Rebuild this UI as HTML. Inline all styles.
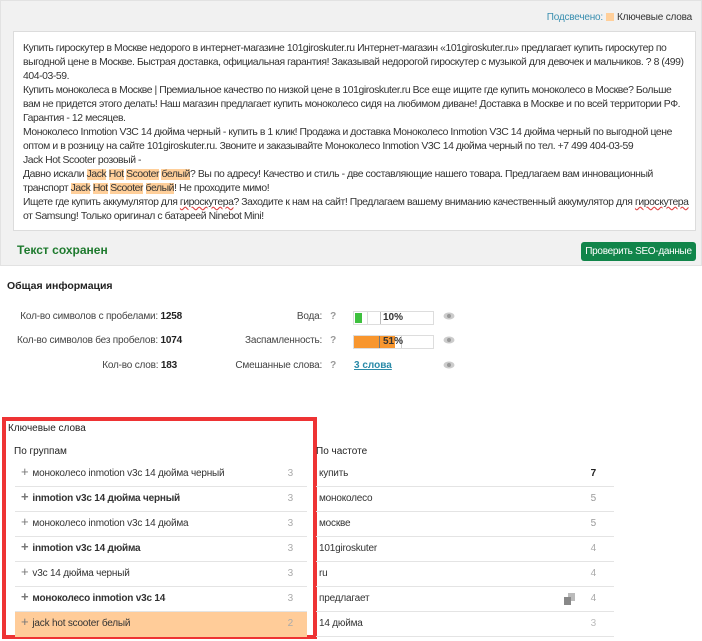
<!DOCTYPE html>
<html><head><meta charset="utf-8"><style>
*{margin:0;padding:0;box-sizing:border-box}
body{width:702px;height:641px;background:#fff;font-family:"Liberation Sans",sans-serif;font-size:11px;color:#333;position:relative;overflow:hidden}
.panel{position:absolute;left:0;top:0;width:702px;height:266px;background:#f1f1f1;border:1px solid #e2e2e2}
.legend{position:absolute;right:9px;top:11px;font-size:10px;color:#333;letter-spacing:-0.2px}
.legend span.l{color:#3a8fb0}
.sw{display:inline-block;width:8px;height:8px;background:#ffcf9a;vertical-align:-1px;margin:0 3px}
.ta{position:absolute;left:12px;top:30px;width:683px;height:200px;background:#fff;border:1px solid #dcdcdc}
.tx{position:absolute;left:22px;top:41px;line-height:14px;font-size:10.4px;color:#333;letter-spacing:-0.42px;white-space:nowrap}
.hl{background:#ffcf9a}
.sq{text-decoration:underline wavy #e04040}
.saved{position:absolute;left:16px;top:242px;font-size:12px;font-weight:bold;color:#1e7a2e}
.btn{position:absolute;left:580px;top:241px;width:115px;height:19px;background:#11854a;color:#fff;border-radius:3px;font-size:10px;letter-spacing:-0.3px;text-align:center;line-height:19px;white-space:nowrap}
h3{position:absolute;font-size:10.5px;font-weight:bold;color:#222}
.r{position:absolute;font-size:10px;line-height:12px;color:#444;text-align:right;white-space:nowrap;letter-spacing:-0.2px}
.r b{color:#222}
.q{color:#999;font-weight:bold;margin-left:8px}
.bar{position:absolute;left:353px;width:81px;height:14px;border:1px solid #ddd;background:#fff}
.eye{position:absolute;left:443px}
.redbox{position:absolute;left:2px;top:417px;width:315px;height:222px;border:4px solid #ee3334}
.row{position:absolute;height:25px;border-bottom:1px solid #e4e4e4;font-size:10px;line-height:24px;letter-spacing:-0.2px;white-space:nowrap}
.lr{left:15px;width:292px;padding-left:6px}
.lr .p{color:#777;font-size:13px;line-height:10px;margin-right:4px}
.lr .n{position:absolute;right:14px;color:#aaa}
.rr{left:316px;width:298px;padding-left:3px;color:#333}
.rr .n{position:absolute;right:18px;color:#999}
</style></head><body>
<div class="panel">
<div class="legend"><span class="l">Подсвечено:</span><span class="sw"></span>Ключевые слова</div>
<div class="ta"></div>
<div class="tx">Купить гироскутер в Москве недорого в интернет-магазине 101giroskuter.ru Интернет-магазин «101giroskuter.ru» предлагает купить гироскутер по<br>выгодной цене в Москве. Быстрая доставка, официальная гарантия! Заказывай недорогой гироскутер с музыкой для девочек и мальчиков. ? 8 (499)<br>404-03-59.<br>Купить моноколеса в Москве | Премиальное качество по низкой цене в 101giroskuter.ru Все еще ищите где купить моноколесо в Москве? Больше<br>вам не придется этого делать! Наш магазин предлагает купить моноколесо сидя на любимом диване! Доставка в Москве и по всей территории РФ.<br>Гарантия - 12 месяцев.<br>Моноколесо Inmotion V3C 14 дюйма черный - купить в 1 клик! Продажа и доставка Моноколесо Inmotion V3C 14 дюйма черный по выгодной цене<br>оптом и в розницу на сайте 101giroskuter.ru. Звоните и заказывайте Моноколесо Inmotion V3C 14 дюйма черный по тел. +7 499 404-03-59<br>Jack Hot Scooter розовый -<br>Давно искали <span class="hl">Jack</span> <span class="hl">Hot</span> <span class="hl">Scooter</span> <span class="hl">белый</span>? Вы по адресу! Качество и стиль - две составляющие нашего товара. Предлагаем вам инновационный<br>транспорт <span class="hl">Jack</span> <span class="hl">Hot</span> <span class="hl">Scooter</span> <span class="hl">белый</span>! Не проходите мимо!<br>Ищете где купить аккумулятор для <span class="sq">гироскутера</span>? Заходите к нам на сайт! Предлагаем вашему вниманию качественный аккумулятор для <span class="sq">гироскутера</span><br>от Samsung! Только оригинал с батареей Ninebot Mini!</div>
<div class="saved">Текст сохранен</div>
<div class="btn">Проверить SEO-данные</div>
</div>
<h3 style="left:7px;top:280px">Общая информация</h3>
<div class="r" style="right:520px;top:311px">Кол-во символов с пробелами: <b>1258</b></div>
<div class="r" style="right:520px;top:335px">Кол-во символов без пробелов: <b>1074</b></div>
<div class="r" style="right:525px;top:360px">Кол-во слов: <b>183</b></div>
<div class="r" style="right:366px;top:311px">Вода:<span class="q">?</span></div>
<div class="r" style="right:366px;top:335px">Заспамленность:<span class="q">?</span></div>
<div class="r" style="right:366px;top:360px">Смешанные слова:<span class="q">?</span></div>
<div class="bar" style="top:311px"><div style="position:absolute;left:1px;top:1px;width:7px;height:10px;background:#3ec03e"></div><div style="position:absolute;left:13px;top:0;width:1px;height:12px;background:#ddd"></div><div style="position:absolute;left:26px;top:0;width:1px;height:12px;background:#bbb"></div><b style="position:absolute;left:29px;top:0;font-size:10px;color:#333">10%</b></div>
<div class="bar" style="top:335px"><div style="position:absolute;left:0;top:0;width:41px;height:12px;background:#f8962e"></div><div style="position:absolute;left:25px;top:0;width:1px;height:12px;background:#777"></div><div style="position:absolute;left:47px;top:0;width:1px;height:12px;background:#ccc"></div><b style="position:absolute;left:29px;top:0;font-size:10px;color:#333">51%</b></div>
<div style="position:absolute;left:354px;top:360px;font-size:10px;color:#2a8aa8;text-decoration:underline;font-weight:bold">3 слова</div>
<svg class="eye" style="top:311px" width="12" height="10"><ellipse cx="6" cy="5" rx="5.5" ry="3.5" fill="#ccc"/><circle cx="6" cy="5" r="2" fill="#999"/></svg>
<svg class="eye" style="top:335px" width="12" height="10"><ellipse cx="6" cy="5" rx="5.5" ry="3.5" fill="#ccc"/><circle cx="6" cy="5" r="2" fill="#999"/></svg>
<svg class="eye" style="top:360px" width="12" height="10"><ellipse cx="6" cy="5" rx="5.5" ry="3.5" fill="#ccc"/><circle cx="6" cy="5" r="2" fill="#999"/></svg>
<div class="redbox"></div>
<h3 style="left:8px;top:423px;font-weight:normal;color:#222;font-size:10px">Ключевые слова</h3>
<div style="position:absolute;left:14px;top:446px;font-size:10px;color:#222">По группам</div>
<div style="position:absolute;left:316px;top:446px;font-size:10px;color:#222">По частоте</div>
<div class="row lr" style="top:462px"><span class="p">+</span>моноколесо inmotion v3c 14 дюйма черный<span class="n">3</span></div>
<div class="row lr" style="top:487px;font-weight:bold"><span class="p">+</span>inmotion v3c 14 дюйма черный<span class="n" style="font-weight:normal">3</span></div>
<div class="row lr" style="top:512px"><span class="p">+</span>моноколесо inmotion v3c 14 дюйма<span class="n">3</span></div>
<div class="row lr" style="top:537px;font-weight:bold"><span class="p">+</span>inmotion v3c 14 дюйма<span class="n" style="font-weight:normal">3</span></div>
<div class="row lr" style="top:562px"><span class="p">+</span>v3c 14 дюйма черный<span class="n">3</span></div>
<div class="row lr" style="top:587px;font-weight:bold"><span class="p">+</span>моноколесо inmotion v3c 14<span class="n" style="font-weight:normal">3</span></div>
<div class="row lr" style="top:612px;background:#ffcc99;border:none"><span class="p">+</span>jack hot scooter белый<span class="n">2</span></div>
<div class="row rr" style="top:462px">купить<span class="n" style="color:#222;font-weight:bold">7</span></div>
<div class="row rr" style="top:487px">моноколесо<span class="n">5</span></div>
<div class="row rr" style="top:512px">москве<span class="n">5</span></div>
<div class="row rr" style="top:537px">101giroskuter<span class="n" style="color:#aaa">4</span></div>
<div class="row rr" style="top:562px">ru<span class="n" style="color:#aaa">4</span></div>
<div class="row rr" style="top:587px">предлагает<svg style="position:absolute;left:248px;top:6px" width="11" height="12"><rect x="4" y="0" width="7" height="8" fill="#bbb"/><rect x="0" y="4" width="7" height="8" fill="#888"/></svg><span class="n" style="color:#aaa">4</span></div>
<div class="row rr" style="top:612px">14 дюйма<span class="n" style="color:#bbb">3</span></div>
</body></html>
